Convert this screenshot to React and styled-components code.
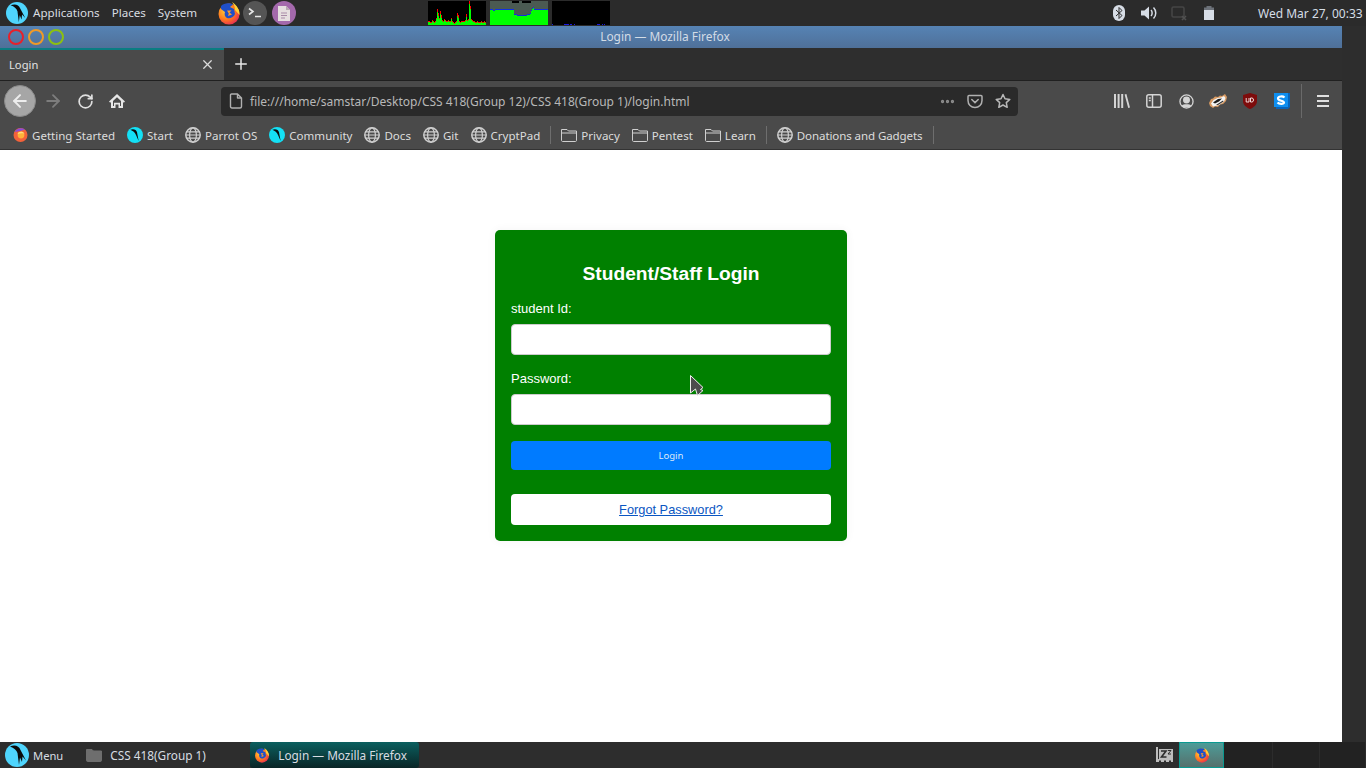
import React from "react";
import styled, { createGlobalStyle } from "styled-components";
import { ArrowLeft, ArrowRight, RotateCw, X, Plus, Ellipsis } from "lucide-react";

const Global = createGlobalStyle`
  html, body { margin: 0; padding: 0; width: 1366px; height: 768px; overflow: hidden; background: #2d2d2d; }
  * { box-sizing: border-box; }
`;

const Desktop = styled.div`
  position: relative;
  width: 1366px;
  height: 768px;
  display: flex;
  flex-direction: column;
  font-family: "Noto Sans", sans-serif;
  font-size: 12px;
  color: #d8dcdf;
  background: #2d2d2d;
`;

/* ---------- top gnome panel ---------- */
const TopPanel = styled.div`
  height: 26px;
  flex: none;
  display: flex;
  align-items: center;
  padding-left: 6px;
  background: #2b2b2b;
`;
const PanelMenu = styled.span`
  margin-left: ${(p) => p.$left}px;
  color: #d9dde0;
  font-size: 11.6px;
  line-height: 26px;
`;
const Launchers = styled.div`
  display: flex;
  align-items: center;
  gap: 2px;
  margin-left: 20px;
`;
const RoundIcon = styled.div`
  width: 24px;
  height: 24px;
  margin-left: ${(p) => p.$left || 0}px;
  border-radius: 50%;
  background: ${(p) => p.$bg};
  display: flex;
  align-items: center;
  justify-content: center;
`;
const Graphs = styled.div`
  display: flex;
  gap: 4px;
  margin-left: 132px;
`;
const GraphBox = styled.svg`
  display: block;
  width: 58px;
  height: 24px;
  background: #000;
`;
const Tray = styled.div`
  margin-left: auto;
  display: flex;
  align-items: center;
  height: 26px;
`;
const TraySlot = styled.div`
  width: 30px;
  height: 26px;
  display: flex;
  align-items: center;
  justify-content: center;
`;
const Clock = styled.span`
  margin-left: 34px;
  width: 108px;
  white-space: nowrap;
  color: #d5dde6;
  font-size: 12px;
`;

/* ---------- browser window ---------- */
const Middle = styled.div`
  flex: 1;
  display: flex;
  min-height: 0;
`;
const Window = styled.div`
  width: 1342px;
  display: flex;
  flex-direction: column;
`;
const SideStrip = styled.div`
  flex: 1;
  background: #2d2d2d;
`;
const TitleBar = styled.div`
  height: 22px;
  flex: none;
  display: flex;
  align-items: center;
  padding-left: 8px;
  gap: 4px;
  background: linear-gradient(#5683b4, #4f7099);
`;
const WinButton = styled.span`
  width: 16px;
  height: 16px;
  border-radius: 50%;
  border: 2px solid ${(p) => p.$c};
`;
const WinTitle = styled.span`
  flex: 1;
  margin-right: 80px;
  padding-bottom: 2px;
  text-align: center;
  color: #d3dce6;
  font-size: 11.9px;
`;
const TabStrip = styled.div`
  height: 33px;
  flex: none;
  display: flex;
  background: #2e2e2e;
  border-bottom: 1px solid #202020;
`;
const Tab = styled.div`
  width: 224px;
  display: flex;
  align-items: center;
  justify-content: space-between;
  padding: 0 9px 2px 9px;
  background: #4a4a4a;
  border-top: 2px solid #0a7d82;
  color: #e2e2e2;
  font-size: 11.2px;
`;
const NewTab = styled.div`
  width: 34px;
  display: flex;
  align-items: center;
  justify-content: center;
  color: #e8e8e8;
`;
const Toolbar = styled.div`
  height: 40px;
  flex: none;
  display: flex;
  align-items: center;
  padding-left: 4px;
  background: #4a4a4a;
`;
const BackButton = styled.div`
  width: 32px;
  height: 32px;
  margin-right: 1px;
  border-radius: 50%;
  background: #a6a6a6;
  border: 1px solid #8a8a8a;
  display: flex;
  align-items: center;
  justify-content: center;
`;
const NavSlot = styled.div`
  width: 32px;
  height: 32px;
  display: flex;
  align-items: center;
  justify-content: center;
  color: ${(p) => p.$c || "#e0e0e0"};
`;
const UrlBar = styled.div`
  width: 797px;
  height: 29px;
  margin-left: 88px;
  display: flex;
  align-items: center;
  padding: 0 1px 0 8px;
  background: #2a2a2a;
  border-radius: 4px;
  color: #b8b8b8;
`;
const UrlText = styled.span`
  margin-left: 7px;
  flex: 1;
  font-size: 12px;
  white-space: nowrap;
`;
const UrlAction = styled.span`
  width: 28px;
  display: flex;
  justify-content: center;
  color: ${(p) => p.$c || "#b0b0b0"};
`;
const ToolGroup = styled.div`
  margin-left: 88px;
  display: flex;
  align-items: center;
`;
const ToolSlot = styled.div`
  width: 32px;
  height: 24px;
  display: flex;
  align-items: center;
  justify-content: center;
  color: #d6d6d6;
`;
const ToolSep = styled.div`
  width: 1px;
  height: 34px;
  margin-left: 3px;
  background: #6a6a6a;
`;
const MenuSlot = styled(ToolSlot)`
  margin-left: 5px;
`;
const BookmarkBar = styled.div`
  height: 29px;
  flex: none;
  display: flex;
  align-items: center;
  padding-left: 7px;
  background: #4a4a4a;
  border-bottom: 1px solid #333;
`;
const Bookmark = styled.div`
  display: flex;
  align-items: center;
  gap: 4px;
  padding: 0 6px;
  color: #dcdcdc;
  font-size: 11.55px;
  letter-spacing: ${(p) => (p.$tight ? "-0.1px" : "0")};
  white-space: nowrap;
`;
const BookSep = styled.div`
  width: 1px;
  height: 18px;
  margin: 0 4px;
  background: #6e6e6e;
`;

/* ---------- login page ---------- */
const Page = styled.main`
  flex: 1;
  background: #fff;
  display: flex;
  justify-content: center;
  align-items: flex-start;
  padding-top: 80px;
  font-family: "Liberation Sans", Arial, sans-serif;
`;
const Card = styled.form`
  width: 352px;
  height: 311px;
  padding: 16px;
  background: #008000;
  border-radius: 5px;
  box-shadow: 0 0 10px rgba(0, 0, 0, 0.05);
  color: #fff;
`;
const Heading = styled.h2`
  margin: 16px 0 16px;
  text-align: center;
  font-size: 19.2px;
  line-height: 23px;
  font-weight: 700;
`;
const Label = styled.label`
  display: block;
  margin-bottom: 7px;
  font-size: 13px;
  line-height: 16px;
`;
const Input = styled.input`
  display: block;
  width: 100%;
  height: 31px;
  margin-bottom: 16px;
  padding: 0 8px;
  background: #fff;
  border: 1px solid #ccc;
  border-radius: 4px;
`;
const LoginButton = styled.button`
  display: block;
  width: 100%;
  height: 29px;
  margin-bottom: 24px;
  border: 0;
  border-radius: 4px;
  background: #007bff;
  color: #dfeaf7;
  font-family: "Noto Sans", sans-serif;
  font-size: 9.5px;
`;
const ForgotBox = styled.div`
  height: 31px;
  display: flex;
  align-items: center;
  justify-content: center;
  background: #fff;
  border-radius: 4px;
`;
const ForgotLink = styled.a`
  color: #0a56c2;
  font-size: 12.8px;
  text-decoration: underline;
`;
const Cursor = styled.svg`
  position: absolute;
  left: 690px;
  top: 375px;
  width: 14px;
  height: 21px;
`;

/* ---------- bottom task bar ---------- */
const TaskBar = styled.div`
  height: 26px;
  flex: none;
  display: flex;
  align-items: center;
  padding-left: 5px;
  background: #2d2d2d;
`;
const TaskLabel = styled.span`
  margin-left: ${(p) => p.$left}px;
  color: #d8dde2;
  font-size: ${(p) => p.$size || 11.8}px;
  white-space: nowrap;
`;
const FolderTask = styled.div`
  width: 164px;
  margin-left: 23px;
  display: flex;
  align-items: center;
`;
const ActiveTask = styled.div`
  width: 169px;
  height: 26px;
  display: flex;
  align-items: center;
  padding-left: 4px;
  border-radius: 3px;
  background: linear-gradient(#0b5f5f, #0a2526);
`;
const SleepSlot = styled.div`
  margin-left: auto;
  display: flex;
  align-items: center;
  margin-right: 5px;
`;
const PagerActive = styled.div`
  width: 45px;
  height: 26px;
  display: flex;
  align-items: center;
  justify-content: center;
  border: 1px solid #0a9990;
  background: linear-gradient(#4d9c98, #56706c);
`;
const Pager = styled.div`
  width: ${(p) => p.$w}px;
  height: 26px;
  background: #222;
  border-right: 1px solid #2c2c2c;
`;

/* ---------- drawn icons ---------- */
const ParrotLogo = ({ size = 22 }) => (
  <svg width={size} height={size} viewBox="0 0 24 24">
    <circle cx="12" cy="12" r="12" fill="#4fd5fd" />
    <path d="M5 3.5C10 1.5 14 3 15.5 7L21 17.5 17.5 13.5 17 19 15 14.5 14 22 12.5 10C11.5 7 9 5 5 3.5Z" fill="#0b0b0b" />
  </svg>
);

const FirefoxIcon = ({ size = 24, id = "ff" }) => (
  <svg width={size} height={size} viewBox="0 0 24 24">
    <defs>
      <radialGradient id={id} cx="35%" cy="35%" r="75%">
        <stop offset="0" stopColor="#ffcf3a" />
        <stop offset="0.55" stopColor="#ff7a1e" />
        <stop offset="1" stopColor="#e5245a" />
      </radialGradient>
    </defs>
    <circle cx="12" cy="13" r="10.5" fill={`url(#${id})`} />
    <path d="M15 1C20 4.5 23 9 22.5 14L18 9C18 6 17 3.5 15 1Z" fill="#ffd335" />
    <path d="M4 5C7 1.5 13 1.5 16 3.5L13 6 17 8 18 13C17 16 13 18 10 17 8 16 7 13 8 11L4 8Z" fill="#1f4fc8" />
    <path d="M10 9.5H14.5L12.5 11.5 15 13.5 11 15 11.8 12.5Z" fill="#ff9a2a" />
  </svg>
);

const BookFox = () => (
  <svg width="15" height="16" viewBox="0 0 15 16">
    <circle cx="7.5" cy="8" r="7" fill="#f4623a" />
    <path d="M1.5 5C3.5 1 8.5 0 12 2.5L7.5 4Z" fill="#8a4bd6" />
    <circle cx="8" cy="8" r="3.4" fill="#ffb23a" />
    <path d="M4.5 7C5.5 4.5 9.5 4 11.5 6.5 9.5 6 6.5 6 4.5 7Z" fill="#ffe07a" />
  </svg>
);

const StartLogo = () => (
  <svg width="16" height="16" viewBox="0 0 24 24">
    <circle cx="12" cy="12" r="12" fill="#14e0f5" />
    <path d="M5 4C10 2 14 4 15 8L17.5 21 13.5 12C12 8 9 5.5 5 4Z" fill="#0b0b0b" />
  </svg>
);

const GlobeIcon = () => (
  <svg width="16" height="16" viewBox="0 0 16 16" fill="none" stroke="#cfcfcf" strokeWidth="1.2">
    <circle cx="8" cy="8" r="7.2" strokeWidth="1.5" />
    <ellipse cx="8" cy="8" rx="3.4" ry="7.2" />
    <path d="M1.5 4.8H14.5M.8 8H15.2M1.5 11.2H14.5" />
  </svg>
);

const FolderIcon = ({ fill = "none", stroke = "#cfcfcf" }) => (
  <svg width="16" height="14" viewBox="0 0 16 14">
    <path d="M.5 12.5V1.5H6L7.5 3H15.5V12.5C15.5 13 15 13.5 14.5 13.5H1.5C1 13.5.5 13 .5 12.5ZM.5 5H15.5" fill={fill} stroke={stroke} />
  </svg>
);

const PageIcon = () => (
  <svg width="14" height="16" viewBox="0 0 14 16" fill="none" stroke="#b0b0b0" strokeWidth="1.4">
    <path d="M2.5 1H8.5L12.5 5V13.5C12.5 14.3 12 15 11 15H3C2 15 1.5 14.3 1.5 13.5V2C1.5 1.5 2 1 2.5 1ZM8.5 1V5H12.5" strokeLinejoin="round" />
  </svg>
);

const HomeIcon = () => (
  <svg width="16" height="16" viewBox="0 0 16 16">
    <path fillRule="evenodd" d="M8 1L16 8.5 14.8 9.8 14 9V15H9.5V11.5H6.5V15H2V9L1.2 9.8 0 8.5ZM4 8V13H5V9.8H11V13H12V8L8 4.2Z" fill="#e6e6e6" />
  </svg>
);

const PocketIcon = () => (
  <svg width="16" height="15" viewBox="0 0 16 15" fill="none" stroke="#b0b0b0" strokeWidth="1.5">
    <path d="M2 1.5H14C14.5 1.5 15 2 15 2.5V6.5C15 10.5 12 13.5 8 13.5S1 10.5 1 6.5V2.5C1 2 1.5 1.5 2 1.5Z" />
    <path d="M4.8 5.5L8 8.6 11.2 5.5" strokeLinecap="round" />
  </svg>
);

const StarIcon = () => (
  <svg width="16" height="16" viewBox="0 0 16 16" fill="none" stroke="#b8b8b8" strokeWidth="1.5">
    <path d="M8 1.5L10 5.8 14.8 6.4 11.3 9.6 12.2 14.3 8 12 3.8 14.3 4.7 9.6 1.2 6.4 6 5.8Z" strokeLinejoin="round" />
  </svg>
);

const LibraryIcon = () => (
  <svg width="16" height="14" viewBox="0 0 16 14" fill="#d4d4d4">
    <rect x="0" y="0" width="2" height="14" />
    <rect x="3.6" y="0" width="2" height="14" />
    <rect x="7.2" y="0" width="2" height="14" />
    <path d="M10.6 .4L12.4 0 16 13.4 14.2 14Z" />
  </svg>
);

const SidebarIcon = () => (
  <svg width="16" height="14" viewBox="0 0 16 14" fill="none" stroke="#d4d4d4" strokeWidth="1.5">
    <rect x=".8" y=".8" width="14.4" height="12.4" rx="2" />
    <path d="M6.5 1V13M2.8 4H4.8M2.8 6.5H4.8" />
  </svg>
);

const AccountIcon = () => (
  <svg width="15" height="15" viewBox="0 0 16 16" fill="none" stroke="#d4d4d4" strokeWidth="1.4">
    <circle cx="8" cy="8" r="7" />
    <circle cx="8" cy="6.3" r="3" fill="#d4d4d4" />
    <path d="M3 12.5C4 10.5 12 10.5 13 12.5L11 14.5H5Z" fill="#d4d4d4" stroke="none" />
  </svg>
);

const BadgerIcon = () => (
  <svg width="18" height="14" viewBox="0 0 18 14">
    <path d="M0 9L2 5 4 4.5 6 2.5 9 3 11 1.5 13 2 16 0 18 3 17 7 14 10 11 10.5 9 13 6 12.5 4 14 1 12Z" fill="#d89a62" />
    <path d="M2 9.5L4.5 6 8.5 4 12 3.5 15 2 16.5 4 15 7.5 10 11 4 12.5Z" fill="#f4f4f4" />
    <path d="M4 8.5L9 5 13 4.5 10 7.5 6 9.5Z" fill="#1c1c1c" />
    <path d="M7 11L14 6.5 14.5 7.5 9 11Z" fill="#2a2a2a" />
  </svg>
);

const UBlockIcon = () => (
  <svg width="14" height="16" viewBox="0 0 14 16">
    <path d="M7 0L14 2V8C14 12 10.5 14.5 7 16 3.5 14.5 0 12 0 8V2Z" fill="#7d0c0c" />
    <path d="M3.2 5V9H6V5M7.5 5V9H9C11 9 11 5 9 5Z" fill="none" stroke="#f0dada" strokeWidth="1" />
  </svg>
);

const StylusIcon = () => (
  <svg width="16" height="16" viewBox="0 0 16 16">
    <path d="M14 0H16V14L14 16H2V14H14Z" fill="#0a63b8" />
    <rect width="14" height="14" fill="#0f8ff0" />
    <path d="M10.5 4.5C9 3 4 3 4 5.5S10 7.5 10 9.5 5 11 3.5 9.5" fill="none" stroke="#fff" strokeWidth="2.2" />
  </svg>
);

const MenuIcon = () => (
  <svg width="12" height="12" viewBox="0 0 12 12" fill="#e0e0e0">
    <rect width="12" height="2" />
    <rect y="5" width="12" height="2" />
    <rect y="10" width="12" height="2" />
  </svg>
);

const BluetoothIcon = () => (
  <svg width="12" height="16" viewBox="0 0 12 16">
    <rect width="12" height="16" rx="6" fill="#d7dde6" />
    <path d="M3 5L9 10.5 6 13.5V2.5L9 5.5 3 11" fill="none" stroke="#2b2b2b" strokeWidth="1" />
  </svg>
);

const VolumeIcon = () => (
  <svg width="16" height="14" viewBox="0 0 16 14">
    <path d="M0 4.5H3.5L8 .5V13.5L3.5 9.5H0Z" fill="#d7dde6" />
    <path d="M10 4C11.5 5.5 11.5 8.5 10 10M12.5 1.5C15.5 4.5 15.5 9.5 12.5 12.5" fill="none" stroke="#d7dde6" strokeWidth="1.5" />
  </svg>
);

const NetIcon = () => (
  <svg width="16" height="15" viewBox="0 0 16 15" fill="none">
    <rect x="1" y="1" width="12" height="10" rx="1.5" stroke="#454545" strokeWidth="1.6" />
    <path d="M11 10L15 14M15 10L11 14" stroke="#505050" strokeWidth="1.6" />
  </svg>
);

const BatteryIcon = () => (
  <svg width="10" height="14" viewBox="0 0 10 14">
    <rect x="2.5" y="0" width="5" height="2" fill="#6d727a" />
    <rect y="1.5" width="10" height="3" fill="#6d727a" />
    <rect y="4" width="10" height="10" fill="#d7dde6" />
  </svg>
);

const TerminalGlyph = () => (
  <svg width="14" height="12" viewBox="0 0 14 12" fill="none" stroke="#e6e6e6" strokeWidth="1.6">
    <path d="M1 1.5L5 4.5 1 7.5M7 9.5H13" />
  </svg>
);

const DocGlyph = () => (
  <svg width="12" height="15" viewBox="0 0 12 15">
    <path d="M0 0H8L12 4V15H0Z" fill="#e6dfe0" />
    <path d="M3 7H9M3 9.5H9M3 12H7" stroke="#a98ba8" strokeWidth="1" />
    <path d="M8 0V4H12" fill="#b9a9b4" />
  </svg>
);

const SleepIcon = () => (
  <svg width="18" height="18" viewBox="0 0 18 18">
    <path d="M0 1H2V13H17V16H15V14.5H13V16H10V14.5H8V16H5V14.5H3V16H0Z" fill="#bdbdbd" />
    <rect x="3" y="3" width="14" height="10" fill="#bdbdbd" />
    <path d="M5 5H10L5.5 11H10.5" fill="none" stroke="#2d2d2d" strokeWidth="1.6" />
    <path d="M12 4.5H15L12 8H15" fill="none" stroke="#2d2d2d" strokeWidth="1" />
  </svg>
);

/* graph data: green height, red cap on top */
const cpu = [3,3,2,2,4,3,2,3,6,13,9,6,11,7,4,3,5,4,3,3,4,3,3,6,3,2,1,2,3,9,7,3,2,3,3,3,3,4,8,4,5,21,16,5,4,3,3,2,2,3,2,2,2,3,2,2,3,2];
const mem = [15,15,15,14,14,15,15,15,15,15,15,15,15,15,15,15,15,15,15,15,15,15,15,15,10,10,10,9,9,9,9,9,9,9,9,9,9,10,10,10,11,14,16,17,15,15,15,15,15,15,15,15,15,15,15,15,15,15];
const net = [1,0,0,0,0,0,0,0,0,0,0,0,1,1,1,1,1,0,1,1,0,0,1,0,0,0,0,0,0,0,0,0,0,0,0,0,0,0,0,0,0,0,0,0,0,1,1,1,0,0,1,0,1,0,0,0,0,0];

const CpuGraph = () => (
  <GraphBox viewBox="0 0 58 24">
    {cpu.map((h, i) => (
      <g key={i}>
        <rect x={i} y={24 - h} width="1" height={h} fill="#00ff00" />
        <rect x={i} y={24 - h - (h > 6 ? 3 : 1)} width="1" height={h > 6 ? 3 : 1} fill="#ff0000" />
      </g>
    ))}
  </GraphBox>
);

const MemGraph = () => (
  <GraphBox viewBox="0 0 58 24">
    <rect width="58" height="24" fill="#4b5a52" />
    <path d="M22 0H29V2H32V0H41V2H22Z" fill="#000" />
    {mem.map((h, i) => (
      <g key={i}>
        <rect x={i} y={24 - h} width="1" height={h} fill="#00ff00" />
        <rect x={i} y={23 - h} width="1" height="1" fill="#1030e0" />
      </g>
    ))}
  </GraphBox>
);

const NetGraph = () => (
  <GraphBox viewBox="0 0 58 24">
    {net.map((h, i) => (h ? <rect key={i} x={i} y="23" width="1" height="1" fill="#1a1ae0" /> : null))}
  </GraphBox>
);

const bookmarks1 = [
  [<BookFox key="i" />, "Getting Started"],
  [<StartLogo key="i" />, "Start"],
  [<GlobeIcon key="i" />, "Parrot OS"],
  [<StartLogo key="i" />, "Community"],
  [<GlobeIcon key="i" />, "Docs"],
  [<GlobeIcon key="i" />, "Git"],
  [<GlobeIcon key="i" />, "CryptPad"],
];
const bookmarks2 = ["Privacy", "Pentest", "Learn"];

export default function App() {
  return (
    <Desktop>
      <Global />
      <TopPanel>
        <ParrotLogo />
        <PanelMenu $left={5}>Applications</PanelMenu>
        <PanelMenu $left={12}>Places</PanelMenu>
        <PanelMenu $left={12}>System</PanelMenu>
        <Launchers>
          <FirefoxIcon id="ffTop" />
          <RoundIcon $bg="#555"><TerminalGlyph /></RoundIcon>
          <RoundIcon $bg="#a469ac" $left={3}><DocGlyph /></RoundIcon>
        </Launchers>
        <Graphs>
          <CpuGraph />
          <MemGraph />
          <NetGraph />
        </Graphs>
        <Tray>
          <TraySlot><BluetoothIcon /></TraySlot>
          <TraySlot><VolumeIcon /></TraySlot>
          <TraySlot><NetIcon /></TraySlot>
          <TraySlot><BatteryIcon /></TraySlot>
          <Clock>Wed Mar 27, 00:33</Clock>
        </Tray>
      </TopPanel>

      <Middle>
        <Window>
          <TitleBar>
            <WinButton $c="#e8202a" />
            <WinButton $c="#ef9a28" />
            <WinButton $c="#8cc010" />
            <WinTitle>Login — Mozilla Firefox</WinTitle>
          </TitleBar>
          <TabStrip>
            <Tab>
              <span>Login</span>
              <X size={15} color="#dcdcdc" />
            </Tab>
            <NewTab><Plus size={18} strokeWidth={2} /></NewTab>
          </TabStrip>
          <Toolbar>
            <BackButton><ArrowLeft size={20} color="#ededed" strokeWidth={2.4} /></BackButton>
            <NavSlot $c="#7d7d7d"><ArrowRight size={20} strokeWidth={2.2} /></NavSlot>
            <NavSlot><RotateCw size={17} strokeWidth={2.4} /></NavSlot>
            <NavSlot><HomeIcon /></NavSlot>
            <UrlBar>
              <PageIcon />
              <UrlText>file:///home/samstar/Desktop/CSS 418(Group 12)/CSS 418(Group 1)/login.html</UrlText>
              <UrlAction $c="#8e8e8e"><Ellipsis size={17} strokeWidth={2.6} /></UrlAction>
              <UrlAction><PocketIcon /></UrlAction>
              <UrlAction><StarIcon /></UrlAction>
            </UrlBar>
            <ToolGroup>
              <ToolSlot><LibraryIcon /></ToolSlot>
              <ToolSlot><SidebarIcon /></ToolSlot>
              <ToolSlot><AccountIcon /></ToolSlot>
              <ToolSlot><BadgerIcon /></ToolSlot>
              <ToolSlot><UBlockIcon /></ToolSlot>
              <ToolSlot><StylusIcon /></ToolSlot>
              <ToolSep />
              <MenuSlot><MenuIcon /></MenuSlot>
            </ToolGroup>
          </Toolbar>
          <BookmarkBar>
            {bookmarks1.map(([icon, label]) => (
              <Bookmark key={label}>{icon}{label}</Bookmark>
            ))}
            <BookSep />
            {bookmarks2.map((label) => (
              <Bookmark key={label}><FolderIcon />{label}</Bookmark>
            ))}
            <BookSep />
            <Bookmark $tight><GlobeIcon />Donations and Gadgets</Bookmark>
            <BookSep />
          </BookmarkBar>
          <Page>
            <Card onSubmit={(e) => e.preventDefault()}>
              <Heading>Student/Staff Login</Heading>
              <Label>student Id:</Label>
              <Input type="text" />
              <Label>Password:</Label>
              <Input type="password" />
              <LoginButton type="submit">Login</LoginButton>
              <ForgotBox><ForgotLink href="#">Forgot Password?</ForgotLink></ForgotBox>
            </Card>
          </Page>
        </Window>
        <SideStrip />
      </Middle>

      <TaskBar>
        <ParrotLogo size={24} />
        <TaskLabel $left={4} $size={11.2}>Menu</TaskLabel>
        <FolderTask>
          <FolderIcon fill="#6e6e6e" stroke="#6e6e6e" />
          <TaskLabel $left={8}>CSS 418(Group 1)</TaskLabel>
        </FolderTask>
        <ActiveTask>
          <FirefoxIcon size={16} id="ffTask" />
          <TaskLabel $left={8}>Login — Mozilla Firefox</TaskLabel>
        </ActiveTask>
        <SleepSlot><SleepIcon /></SleepSlot>
        <PagerActive><FirefoxIcon size={16} id="ffPager" /></PagerActive>
        <Pager $w={49} />
        <Pager $w={47} />
        <Pager $w={46} />
      </TaskBar>

      <Cursor viewBox="0 0 14 21">
        <path d="M.5 .5V18L5.5 14 7.5 20.5 13 15.5 10.5 14.5 13 12.5Z" fill="#4d4d4d" stroke="#f0f0f0" strokeWidth="1" />
      </Cursor>
    </Desktop>
  );
}
